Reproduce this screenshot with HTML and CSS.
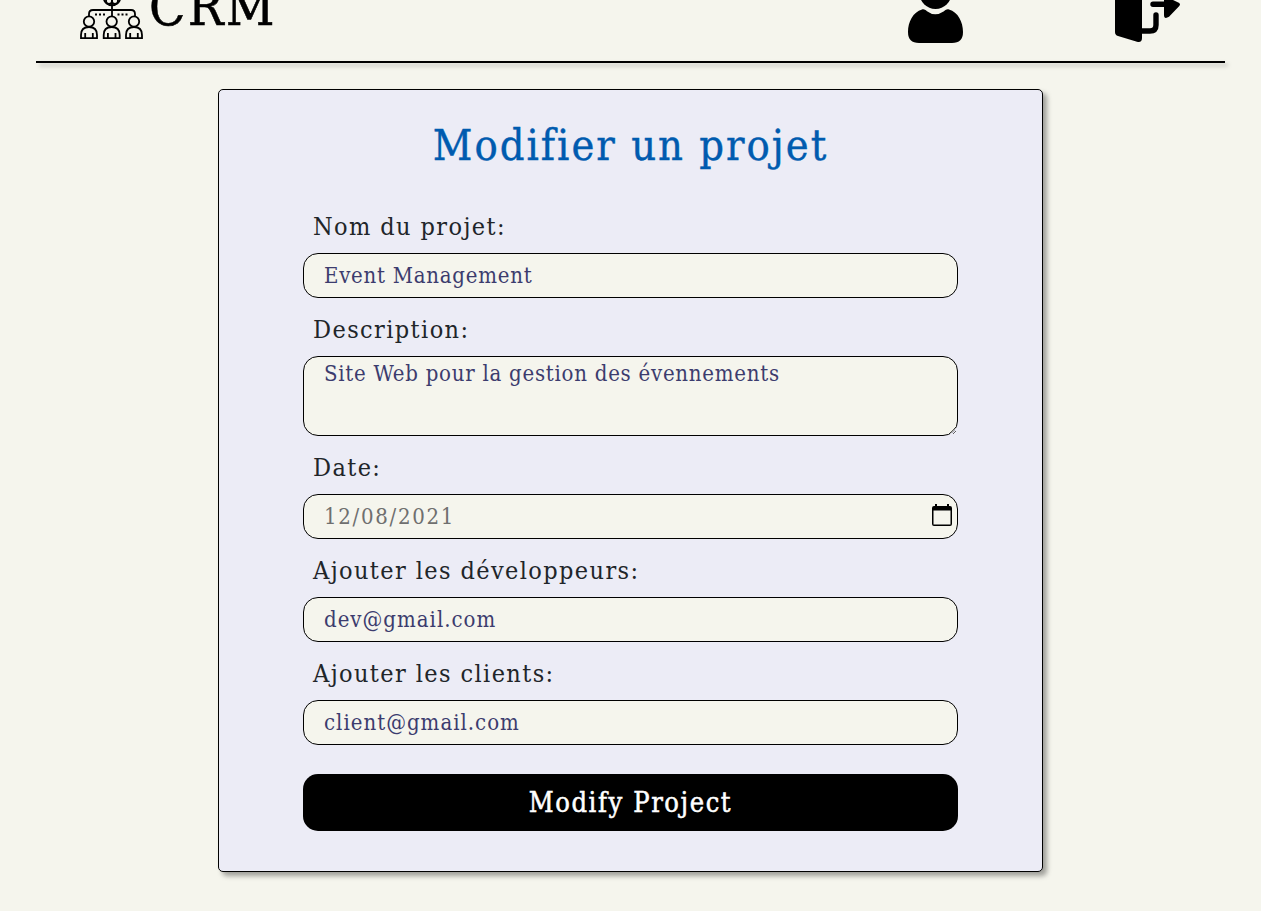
FILE: index.html
```html
<!DOCTYPE html>
<html lang="fr">
<head>
<meta charset="utf-8">
<title>CRM</title>
<link rel="stylesheet" href="styles.css">
</head>
<body>
<header class="topbar">
  <div class="brand">
    <svg class="team" viewBox="0 0 64 40" fill="none" stroke="#000" stroke-width="1.8">
      <circle cx="32" cy="-3" r="8.4"/>
      <circle cx="29" cy="1" r="3"/><circle cx="35" cy="1" r="3"/>
      <path d="M32 0v16M9 16v-2q0-4 4-4h38q4 0 4 4v2"/>
      <path d="M15 14.500h12M37.500 14.500h12" stroke-dasharray="2 2"/>
      <g id="person"><circle cx="9" cy="21.500" r="5.200"/><path d="M1 38.200V35q0-8 8-8t8 8v3.200zM5.200 38v-5M12.800 38v-5"/></g>
      <use href="#person" x="22.700"/><use href="#person" x="45"/>
    </svg>
    <span class="brand-name">CRM</span>
  </div>
  <nav class="actions">
    <svg class="user" viewBox="0 0 56 44"><circle cx="27.500" cy="-7" r="16"/><path d="M14 9.500c2-.5 3 .2 5 1.700q8 6 17 0c2-1.500 3-2.200 5-1.700C50 12 55 22 55 32q0 11-11 11H11Q0 43 0 32C0 22 5 12 14 9.500z"/></svg>
    <svg class="logout" viewBox="0 0 66 44"><path d="M0 0h27v38q0 5-5 3.800L3 36q-3-1-3-4zM49 0h9l6.300 3q1.500 1.500 0 3L54 16.800q-5 3-5-1.800z"/><path d="M38 4.200h14M27 31h8q6 0 6-6V15" fill="none" stroke="#000" stroke-width="5.400" stroke-linecap="round"/></svg>
  </nav>
</header>
<hr class="rule">
<main class="card">
  <h1 class="title">Modifier un projet</h1>
  <form class="form">
    <label class="label" for="name">Nom du projet:</label>
    <input class="field" id="name" type="text" value="Event Management">
    <label class="label" for="desc">Description:</label>
    <textarea class="field area" id="desc">Site Web pour la gestion des évennements</textarea>
    <label class="label" for="date">Date:</label>
    <div class="date-box">
      <input class="field date" id="date" type="text" value="12/08/2021">
      <svg class="calendar" viewBox="0 0 20 22"><path d="M3 0h2v2h10V0h2v2h1q2 0 2 2v16q0 2-2 2H2q-2 0-2-2V4q0-2 2-2h1zM1.500 6.500v14h17v-14z" fill-rule="evenodd"/></svg>
    </div>
    <label class="label" for="dev">Ajouter les développeurs:</label>
    <input class="field mail" id="dev" type="text" value="dev@gmail.com">
    <label class="label" for="client">Ajouter les clients:</label>
    <input class="field mail" id="client" type="text" value="client@gmail.com">
    <button class="submit" type="button">Modify Project</button>
  </form>
</main>
</body>
</html>
```
FILE: styles.css
```css
* { box-sizing: border-box; }
body {
  margin: 0;
  height: 911px;
  overflow: hidden;
  background: #f5f5ed;
  font-family: "DejaVu Serif Condensed", "DejaVu Serif", serif;
  font-stretch: condensed;
}
.topbar {
  height: 61px;
  margin: 0 36px;
  padding: 0 44px;
  display: flex;
  justify-content: space-between;
}
.rule {
  height: 2px;
  margin: 0 36px;
  border: 0;
  background: #000;
  box-shadow: 3px 3px 4px rgba(0, 0, 0, .25);
}
.brand { display: flex; gap: 5px; }
.team { width: 64px; height: 40px; }
.brand-name { font-size: 53px; line-height: 60px; margin-top: -23px; letter-spacing: 2.2px; -webkit-text-stroke: .5px #000; }
.actions { display: flex; gap: 151px; }
.user { width: 56px; height: 44px; }
.logout { width: 66px; height: 44px; }
.card {
  width: 825px;
  height: 783px;
  margin: 26px auto 0;
  padding: 0 84px;
  border: 1px solid #000;
  border-radius: 5px;
  background: #ececf6;
  box-shadow: 4px 4px 5px rgba(0, 0, 0, .35);
}
.title {
  margin: 0;
  height: 105px;
  line-height: 110px;
  text-align: center;
  font-size: 43px;
  font-weight: 400;
  letter-spacing: 2px;
  color: #005baf;
  -webkit-text-stroke: .4px #005baf;
}
.form { display: flex; flex-direction: column; }
.label {
  height: 58px;
  padding-left: 10px;
  line-height: 63px;
  font-size: 25px;
  letter-spacing: 1.4px;
  color: #212529;
}
.field {
  width: 100%;
  height: 45px;
  padding: 0 20px;
  border: 1px solid #000;
  border-radius: 15px;
  background: #f5f5ed;
  font: inherit;
  font-size: 22px;
  letter-spacing: .74px;
  color: #3c3c6e;
  outline: 0;
}
.area { height: 80px; line-height: 33px; display: block; resize: vertical; }
.mail { letter-spacing: 1px; }
.date-box { display: flex; position: relative; }
.date { color: #6f6f6f; letter-spacing: 1.7px; }
.calendar { position: absolute; right: 6px; top: 10px; width: 20px; height: 22px; }
.submit {
  height: 57px;
  margin-top: 29px;
  padding: 0;
  border: 0;
  border-radius: 15px;
  background: #000;
  color: #fff;
  font: inherit;
  font-size: 27px;
  letter-spacing: 1.6px;
  -webkit-text-stroke: .5px #fff;
}
```
